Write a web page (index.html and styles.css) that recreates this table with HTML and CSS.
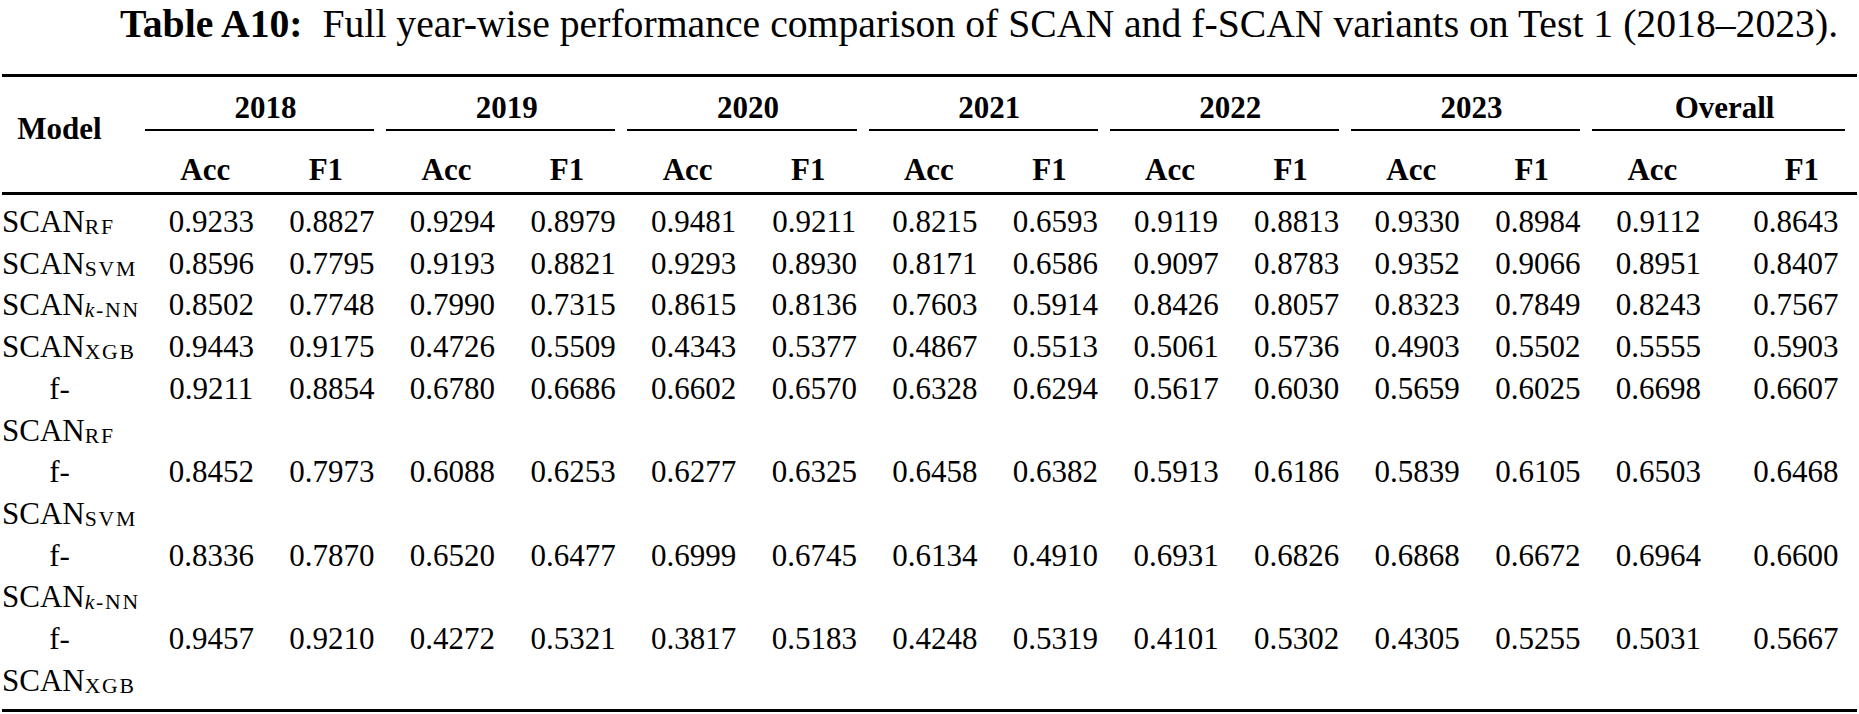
FILE: index.html
```html
<!DOCTYPE html>
<html lang="en">
<head>
<meta charset="utf-8">
<title>Table A10</title>
<link rel="stylesheet" href="styles.css">
</head>
<body>
<div class="page">
  <p class="caption"><span class="label">Table A10:</span>&ensp;Full year-wise performance comparison of SCAN and f-SCAN variants on Test 1 (2018–2023).</p>
  <table class="results">
    <colgroup>
      <col class="c-model">
      <col class="c-num"><col class="c-num"><col class="c-num"><col class="c-num">
      <col class="c-num"><col class="c-num"><col class="c-num"><col class="c-num">
      <col class="c-num"><col class="c-num"><col class="c-num"><col class="c-num">
      <col class="c-num">
      <col class="c-last">
    </colgroup>
    <thead>
      <tr class="h1">
        <th rowspan="2" class="model-h">Model</th>
        <th colspan="2" class="grp"><div class="grp-in">2018</div></th>
        <th colspan="2" class="grp"><div class="grp-in">2019</div></th>
        <th colspan="2" class="grp"><div class="grp-in">2020</div></th>
        <th colspan="2" class="grp"><div class="grp-in">2021</div></th>
        <th colspan="2" class="grp"><div class="grp-in">2022</div></th>
        <th colspan="2" class="grp"><div class="grp-in">2023</div></th>
        <th colspan="2" class="grp"><div class="grp-in">Overall</div></th>
      </tr>
      <tr class="h2">
        <th>Acc</th><th>F1</th><th>Acc</th><th>F1</th><th>Acc</th><th>F1</th>
        <th>Acc</th><th>F1</th><th>Acc</th><th>F1</th><th>Acc</th><th>F1</th>
        <th>Acc</th><th class="last">F1</th>
      </tr>
    </thead>
    <tbody>
      <tr><td class="model">SCAN<sub>RF</sub></td><td>0.9233</td><td>0.8827</td><td>0.9294</td><td>0.8979</td><td>0.9481</td><td>0.9211</td><td>0.8215</td><td>0.6593</td><td>0.9119</td><td>0.8813</td><td>0.9330</td><td>0.8984</td><td>0.9112</td><td class="last">0.8643</td></tr>
      <tr><td class="model">SCAN<sub>SVM</sub></td><td>0.8596</td><td>0.7795</td><td>0.9193</td><td>0.8821</td><td>0.9293</td><td>0.8930</td><td>0.8171</td><td>0.6586</td><td>0.9097</td><td>0.8783</td><td>0.9352</td><td>0.9066</td><td>0.8951</td><td class="last">0.8407</td></tr>
      <tr><td class="model">SCAN<sub><i>k</i>-NN</sub></td><td>0.8502</td><td>0.7748</td><td>0.7990</td><td>0.7315</td><td>0.8615</td><td>0.8136</td><td>0.7603</td><td>0.5914</td><td>0.8426</td><td>0.8057</td><td>0.8323</td><td>0.7849</td><td>0.8243</td><td class="last">0.7567</td></tr>
      <tr><td class="model">SCAN<sub>XGB</sub></td><td>0.9443</td><td>0.9175</td><td>0.4726</td><td>0.5509</td><td>0.4343</td><td>0.5377</td><td>0.4867</td><td>0.5513</td><td>0.5061</td><td>0.5736</td><td>0.4903</td><td>0.5502</td><td>0.5555</td><td class="last">0.5903</td></tr>
      <tr><td class="model"><span class="pre">f-</span>SCAN<sub>RF</sub></td><td>0.9211</td><td>0.8854</td><td>0.6780</td><td>0.6686</td><td>0.6602</td><td>0.6570</td><td>0.6328</td><td>0.6294</td><td>0.5617</td><td>0.6030</td><td>0.5659</td><td>0.6025</td><td>0.6698</td><td class="last">0.6607</td></tr>
      <tr><td class="model"><span class="pre">f-</span>SCAN<sub>SVM</sub></td><td>0.8452</td><td>0.7973</td><td>0.6088</td><td>0.6253</td><td>0.6277</td><td>0.6325</td><td>0.6458</td><td>0.6382</td><td>0.5913</td><td>0.6186</td><td>0.5839</td><td>0.6105</td><td>0.6503</td><td class="last">0.6468</td></tr>
      <tr><td class="model"><span class="pre">f-</span>SCAN<sub><i>k</i>-NN</sub></td><td>0.8336</td><td>0.7870</td><td>0.6520</td><td>0.6477</td><td>0.6999</td><td>0.6745</td><td>0.6134</td><td>0.4910</td><td>0.6931</td><td>0.6826</td><td>0.6868</td><td>0.6672</td><td>0.6964</td><td class="last">0.6600</td></tr>
      <tr><td class="model"><span class="pre">f-</span>SCAN<sub>XGB</sub></td><td>0.9457</td><td>0.9210</td><td>0.4272</td><td>0.5321</td><td>0.3817</td><td>0.5183</td><td>0.4248</td><td>0.5319</td><td>0.4101</td><td>0.5302</td><td>0.4305</td><td>0.5255</td><td>0.5031</td><td class="last">0.5667</td></tr>
    </tbody>
  </table>
</div>
</body>
</html>
```

FILE: styles.css
```css
html, body {
  margin: 0;
  padding: 0;
  background: #fff;
}

body {
  font-family: "Liberation Serif", "Times New Roman", serif;
  color: #000;
}

.page {
  padding: 0 2px;
}

.caption {
  margin: 0 0 30px;
  padding: 4px 0 0 99px;
  font-size: 39.7px;
  line-height: 40px;
  text-align: center;
  white-space: nowrap;
}

.caption .label {
  font-weight: bold;
}

.results {
  width: 1855px;
  table-layout: fixed;
  border-collapse: separate;
  border-spacing: 0;
  border-top: 3px solid #000;
  border-bottom: 3px solid #000;
  font-size: 31px;
}

.c-model {
  width: 143px;
}

.c-num {
  width: 120.6px;
}

th,
td {
  padding: 0;
}

th {
  font-weight: bold;
  text-align: center;
}

.model-h {
  vertical-align: middle;
  padding: 0 28px 11px 0;
  line-height: 40px;
  border-bottom: 3px solid #000;
}

.grp {
  vertical-align: top;
}

.grp-in {
  padding-top: 11px;
  line-height: 40px;
}

.grp-in::after {
  content: "";
  display: block;
  height: 2px;
  margin: 1px 12px 0 0;
  background: #000;
}

.h2 th {
  padding: 19px 0 2px;
  line-height: 40px;
  border-bottom: 3px solid #000;
}

.h2 th.last {
  padding-left: 34px;
}

td {
  padding-left: 12px;
  line-height: 41.7px;
  text-align: center;
  vertical-align: top;
  white-space: nowrap;
}

tbody tr:first-child td {
  padding-top: 6px;
}

tbody tr:last-child td {
  padding-bottom: 8px;
}

td.model {
  padding-left: 0;
  text-align: left;
}

td.last {
  padding-left: 22px;
}

.pre {
  display: block;
  width: 115px;
  text-align: center;
}

sub {
  font-size: 0.7em;
  line-height: 1;
  vertical-align: -2px;
  letter-spacing: 0.08em;
}
```
